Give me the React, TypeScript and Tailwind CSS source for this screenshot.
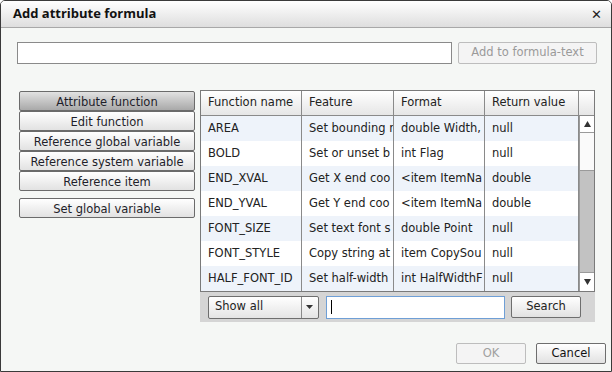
import React from "react";

const rows = [
  ["AREA", "Set bounding r", "double Width,", "null"],
  ["BOLD", "Set or unset b", "int Flag", "null"],
  ["END_XVAL", "Get X end coo", "<item ItemNa", "double"],
  ["END_YVAL", "Get Y end coo", "<item ItemNa", "double"],
  ["FONT_SIZE", "Set text font s", "double Point", "null"],
  ["FONT_STYLE", "Copy string at", "item CopySou", "null"],
  ["HALF_FONT_ID", "Set half-width", "int HalfWidthF", "null"],
];

const widths = ["w-[101px]", "w-[92px]", "w-[91px]", "w-[94px]"];

function LeftButton({ label, selected, className = "" }: { label: string; selected?: boolean; className?: string }) {
  return (
    <div
      className={
        "h-[20px] flex items-center justify-center border border-[#6b6b6b] rounded-[2px] text-[11.5px] text-[#1e1e2a] leading-[18px] pt-px whitespace-nowrap " +
        (selected
          ? "bg-gradient-to-b from-[#e2e2e2] to-[#a9a9a9] "
          : "bg-gradient-to-b from-white to-[#e2e2e2] ") +
        className
      }
    >
      {label}
    </div>
  );
}

export default function App() {
  return (
    <div
      className="w-[612px] h-[372px] bg-white"
      style={{ fontFamily: "'DejaVu Sans', 'Open Sans', sans-serif" }}
    >
      <div className="w-full h-full flex flex-col border border-[#3a3a3a] rounded-t-[5px] overflow-hidden">
        {/* Title bar */}
        <div className="h-[27px] shrink-0 flex items-center justify-between pl-[12px] pr-[9px] bg-gradient-to-b from-white to-[#dedede] border-b border-[#a8a8a8]">
          <span className="text-[13px] font-bold text-[#111]" style={{ fontFamily: "'Open Sans', sans-serif" }}>Add attribute formula</span>
          <span className="text-[13px] font-bold text-[#222] leading-none">✕</span>
        </div>

        {/* Body */}
        <div className="flex-1 flex flex-col bg-[#f5f7f5] pl-[16px] pr-[5px] pt-[14px]">
          <div className="flex items-center gap-[6px]">
            <div className="w-[435px] h-[22px] bg-white border border-[#8a8a8a]" />
            <div className="w-[139px] h-[22px] flex items-center justify-center border border-[#bdbdbd] rounded-[2px] bg-[#f4f4f4] text-[11.5px] text-[#9a9a9a]">
              Add to formula-text
            </div>
          </div>

          <div className="flex mt-[26px]">
            {/* Left buttons */}
            <div className="w-[176px] ml-[2px] mt-[1px] flex flex-col">
              <LeftButton label="Attribute function" selected />
              <LeftButton label="Edit function" />
              <LeftButton label="Reference global variable" />
              <LeftButton label="Reference system variable" />
              <LeftButton label="Reference item" />
              <LeftButton label="Set global variable" className="mt-[7px]" />
            </div>

            {/* Table panel */}
            <div className="ml-[5px] w-[395px] flex flex-col">
              <div className="border border-[#7a7a7a] bg-white">
                {/* Header */}
                <div className="flex h-[25px] bg-gradient-to-b from-white to-[#e6e6e6] border-b border-[#8a8a8a]">
                  {["Function name", "Feature", "Format", "Return value"].map((h, i) => (
                    <div
                      key={h}
                      className={widths[i] + " shrink-0 flex items-center pl-[7px] text-[11.5px] text-[#222] border-r border-[#8a8a8a] whitespace-nowrap overflow-hidden"}
                    >
                      {h}
                    </div>
                  ))}
                  <div className="flex-1" />
                </div>
                {/* Body */}
                <div className="flex">
                  <div className="flex flex-col">
                    {rows.map((r, ri) => (
                      <div key={ri} className={"flex h-[25px] " + (ri % 2 === 0 ? "bg-[#eef3fa]" : "bg-white")}>
                        {r.map((c, ci) => (
                          <div
                            key={ci}
                            className={widths[ci] + " shrink-0 flex items-center pl-[7px] text-[11.5px] text-[#222] border-r border-[#8a8a8a] whitespace-nowrap overflow-hidden"}
                          >
                            {c}
                          </div>
                        ))}
                      </div>
                    ))}
                  </div>
                  {/* Scrollbar */}
                  <div className="flex-1 flex flex-col bg-[#c2c2c2] border-l border-[#9a9a9a]">
                    <div className="h-[17px] bg-white border-b border-[#9a9a9a] flex items-center justify-center">
                      <svg width="7" height="6" viewBox="0 0 7 6"><path d="M3.5 0 L7 6 H0 Z" fill="#333" /></svg>
                    </div>
                    <div className="h-[38px] bg-[#fafafa] border-b border-[#9a9a9a]" />
                    <div className="flex-1" />
                    <div className="h-[19px] bg-white border-t border-[#9a9a9a] flex items-center justify-center">
                      <svg width="7" height="6" viewBox="0 0 7 6"><path d="M0 0 H7 L3.5 6 Z" fill="#333" /></svg>
                    </div>
                  </div>
                </div>
              </div>
              {/* Toolbar */}
              <div className="h-[30px] bg-[#d5d5d5] flex items-center pl-[8px]">
                <div className="w-[111px] h-[23px] flex border border-[#6e6e6e] rounded-[2px] bg-gradient-to-b from-white to-[#e4e4e4]">
                  <div className="flex-1 flex items-center pl-[6px] text-[11.5px] text-[#222]">Show all</div>
                  <div className="w-[17px] border-l border-[#8a8a8a] flex items-center justify-center">
                    <svg width="8" height="4" viewBox="0 0 8 4"><path d="M0 0 H7 L3.5 4 Z" fill="#333" /></svg>
                  </div>
                </div>
                <div className="ml-[7px] w-[179px] h-[23px] bg-white border border-[#6f9fd6] flex items-center pl-[4px]">
                  <div className="w-px h-[14px] bg-black" />
                </div>
                <div className="ml-[6px] w-[70px] h-[22px] flex items-center justify-center border border-[#6e6e6e] rounded-[2px] bg-gradient-to-b from-white to-[#e2e2e2] text-[11.5px] text-[#222]">
                  Search
                </div>
              </div>
            </div>
          </div>

          {/* Bottom buttons */}
          <div className="flex justify-end gap-[10px] mt-[21px]">
            <div className="w-[70px] h-[21px] flex items-center justify-center border border-[#bdbdbd] rounded-[2px] bg-[#f4f4f4] text-[11.5px] text-[#a0a0a0]">
              OK
            </div>
            <div className="w-[70px] h-[21px] flex items-center justify-center border border-[#6e6e6e] rounded-[2px] bg-gradient-to-b from-white to-[#e2e2e2] text-[11.5px] text-[#111]">
              Cancel
            </div>
          </div>
        </div>
      </div>
    </div>
  );
}
